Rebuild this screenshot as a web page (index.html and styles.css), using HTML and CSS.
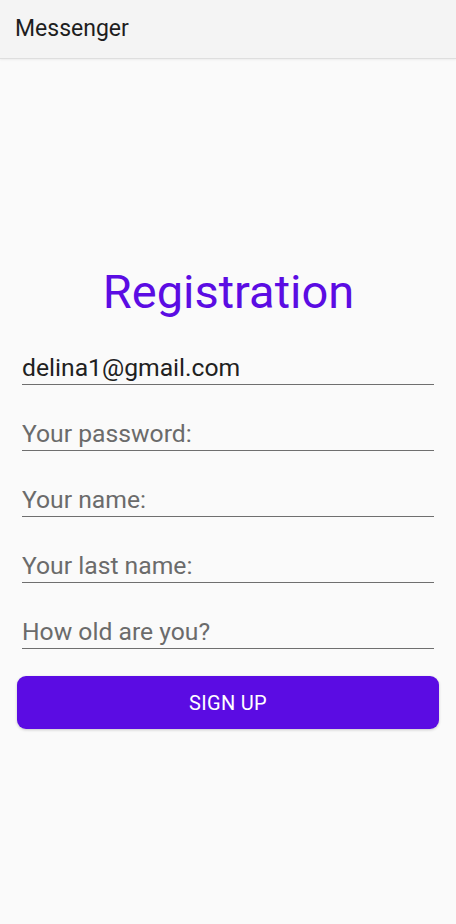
FILE: index.html
```html
<!DOCTYPE html>
<html>
<head>
<meta charset="utf-8">
<link rel="stylesheet" href="styles.css">
</head>
<body>
<header class="appbar"><span class="appbar-title">Messenger</span></header>
<main class="content">
  <h1 class="heading">Registration</h1>
  <form class="form">
    <div class="field"><input class="input" type="text" value="delina1@gmail.com"></div>
    <div class="field"><input class="input" type="password" placeholder="Your password:"></div>
    <div class="field"><input class="input" type="text" placeholder="Your name:"></div>
    <div class="field"><input class="input" type="text" placeholder="Your last name:"></div>
    <div class="field"><input class="input" type="text" placeholder="How old are you?"></div>
    <button class="button" type="button">SIGN UP</button>
  </form>
</main>
</body>
</html>
```
FILE: styles.css
```css
html, body {
  margin: 0;
  padding: 0;
}
body {
  background: #fafafa;
  font-family: Roboto, "Liberation Sans", sans-serif;
  width: 456px;
  height: 924px;
  overflow: hidden;
}
.appbar {
  height: 58px;
  background: #f4f4f4;
  border-bottom: 1px solid #dedede;
  box-shadow: 0 1px 2px rgba(0,0,0,0.06);
  display: flex;
  align-items: center;
  padding-left: 15px;
  box-sizing: content-box;
}
.appbar-title {
  font-size: 23px;
  color: #1e1e1e;
  margin-top: -2px;
}
.content {
  padding: 0 22px 0 22px;
}
.heading {
  margin: 206px 0 0 0;
  font-size: 47px;
  line-height: 54px;
  font-weight: 400;
  color: #5b0ce3;
  text-align: center;
  padding-left: 1px;
}
.form {
  display: flex;
  flex-direction: column;
}
.field {
  padding: 34px 0 2px 0;
  border-bottom: 1px solid #6f6f6f;
}
.input {
  display: block;
  width: 100%;
  border: 0;
  outline: 0;
  background: transparent;
  padding: 0;
  margin: 0;
  font-family: Roboto, "Liberation Sans", sans-serif;
  font-size: 24.7px;
  line-height: 29px;
  height: 29px;
  color: #212121;
}
.input::placeholder {
  color: #6b6b6b;
  opacity: 1;
}
.button {
  margin: 27px -5px 0 -5px;
  height: 53px;
  border: 0;
  border-radius: 9px;
  background: #5b0ce3;
  color: #ffffff;
  font-family: Roboto, "Liberation Sans", sans-serif;
  font-size: 20px;
  font-weight: 400;
  letter-spacing: 0.3px;
  box-shadow: 0 1px 3px rgba(0,0,0,0.2);
}
```
